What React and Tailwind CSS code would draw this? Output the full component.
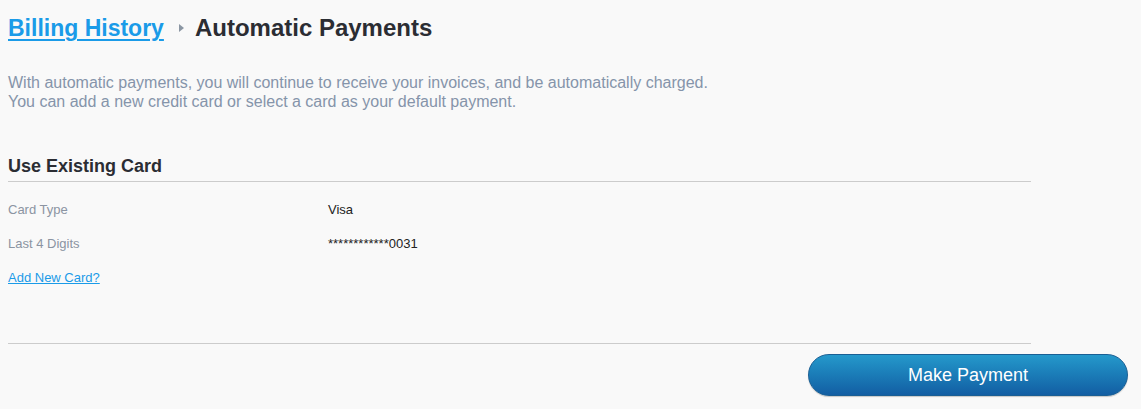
import React from 'react';

export default function App() {
  const rows = [
    { label: 'Card Type', value: 'Visa' },
    { label: 'Last 4 Digits', value: '************0031' },
  ];

  return (
    <div className="min-h-screen bg-[#f9f9f9] font-['Liberation_Sans',Arial,sans-serif]">
      {/* Breadcrumb */}
      <div className="flex items-center pl-2 pt-[14px]">
        <a href="#" className="text-[23px] leading-[28px] font-bold text-[#1a9be8] underline underline-offset-[3px] decoration-[2px]">
          Billing History
        </a>
        <span className="ml-[15px] mr-[11px] w-0 h-0 border-y-[4px] border-y-transparent border-l-[5px] border-l-[#8b96a3]" />
        <h1 className="text-[24px] leading-[28px] font-bold text-[#2b2d33]">Automatic Payments</h1>
      </div>

      <p className="pl-2 mt-[31px] text-[16px] leading-[19px] text-[#8594aa]">
        With automatic payments, you will continue to receive your invoices, and be automatically charged.
        <br />
        You can add a new credit card or select a card as your default payment.
      </p>

      {/* Existing card */}
      <div className="ml-2 w-[1023px] mt-[44px]">
        <h2 className="text-[18px] leading-[22px] font-bold text-[#2b2d33] pb-[4px] border-b border-[#cccccc]">
          Use Existing Card
        </h2>
        <div className="pt-[21px] flex flex-col gap-[20px]">
          {rows.map(r => (
            <div key={r.label} className="flex text-[13px] leading-[14px]">
              <span className="w-[320px] text-[#8b94a2]">{r.label}</span>
              <span className="text-[#222]">{r.value}</span>
            </div>
          ))}
          <a href="#" className="text-[13px] leading-[14px] text-[#1a9be8] underline self-start">
            Add New Card?
          </a>
        </div>
        <div className="mt-[58px] border-b border-[#cccccc]" />
      </div>

      <div className="flex justify-end pr-[13px] mt-[10px]">
        <button className="w-[320px] h-[42px] rounded-full bg-gradient-to-b from-[#2599cb] to-[#135ea3] border border-[#1a5f94] text-white text-[18px] shadow-[0_1px_1px_rgba(0,0,0,0.2)]">
          Make Payment
        </button>
      </div>
    </div>
  );
}
